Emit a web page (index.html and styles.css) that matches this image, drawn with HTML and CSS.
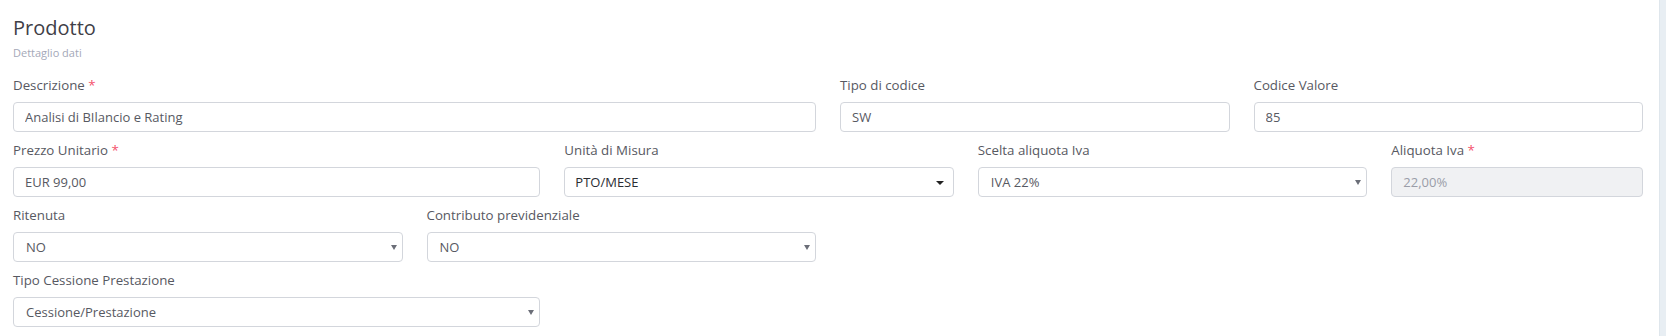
FILE: index.html
```html
<!DOCTYPE html>
<html lang="it">
<head>
<meta charset="UTF-8">
<meta name="viewport" content="width=device-width, initial-scale=1.0">
<title>Prodotto</title>
<link rel="stylesheet" href="styles.css">
</head>
<body>

<div class="page">
  <div class="content">
    <div class="head">
      <h3 class="title">Prodotto</h3>
      <div class="subtitle">Dettaglio dati</div>
    </div>

    <form class="form" onsubmit="return false;">
      <div class="row">
        <div class="field span-6">
          <label for="descrizione">Descrizione <span class="req">*</span></label>
          <input type="text" id="descrizione" value="Analisi di BIlancio e Rating">
        </div>
        <div class="field span-3">
          <label for="tipoCodice">Tipo di codice</label>
          <input type="text" id="tipoCodice" value="SW">
        </div>
        <div class="field span-3">
          <label for="codiceValore">Codice Valore</label>
          <input type="text" id="codiceValore" value="85">
        </div>
      </div>

      <div class="row">
        <div class="field span-4">
          <label for="prezzo">Prezzo Unitario <span class="req">*</span></label>
          <input type="text" id="prezzo" value="EUR 99,00">
        </div>
        <div class="field span-3">
          <label for="unita">Unità di Misura</label>
          <div class="select picker">
            <select id="unita">
              <option>PTO/MESE</option>
            </select>
          </div>
        </div>
        <div class="field span-3">
          <label for="sceltaIva">Scelta aliquota Iva</label>
          <div class="select">
            <select id="sceltaIva">
              <option>IVA 22%</option>
            </select>
          </div>
        </div>
        <div class="field span-2">
          <label for="aliquota">Aliquota Iva <span class="req">*</span></label>
          <input type="text" id="aliquota" value="22,00%" disabled>
        </div>
      </div>

      <div class="row">
        <div class="field span-3">
          <label for="ritenuta">Ritenuta</label>
          <div class="select">
            <select id="ritenuta">
              <option>NO</option>
            </select>
          </div>
        </div>
        <div class="field span-3">
          <label for="contributo">Contributo previdenziale</label>
          <div class="select">
            <select id="contributo">
              <option>NO</option>
            </select>
          </div>
        </div>
      </div>

      <div class="row">
        <div class="field span-4">
          <label for="cessione">Tipo Cessione Prestazione</label>
          <div class="select">
            <select id="cessione">
              <option>Cessione/Prestazione</option>
            </select>
          </div>
        </div>
      </div>
    </form>
  </div>
  <div class="scroll-track"></div>
</div>

</body>
</html>
```

FILE: styles.css
```css
html, body {
  margin: 0;
  padding: 0;
}
body {
  font-family: "Open Sans", Arial, sans-serif;
  background-color: #fff;
  color: #575962;
}
.page {
  display: flex;
  min-height: 336px;
}
.content {
  flex: 1;
  padding: 15px 16px 0 13px;
}
.scroll-track {
  width: 6px;
  background-color: #e8eef3;
  border-left: 1px solid #dfe6ec;
}

.title {
  margin: 0;
  font-size: 20px;
  line-height: 25px;
  font-weight: 400;
  color: #3f4047;
}
.subtitle {
  margin-top: 5px;
  font-size: 11px;
  line-height: 16px;
  color: #a4a8b8;
}

.form {
  margin-top: 14px;
}
.row {
  display: grid;
  grid-template-columns: repeat(12, 1fr);
  column-gap: 24px;
  margin-bottom: 8px;
}
.span-2 { grid-column: span 2; }
.span-3 { grid-column: span 3; }
.span-4 { grid-column: span 4; }
.span-6 { grid-column: span 6; }

label {
  display: block;
  font-size: 13.3px;
  line-height: 20px;
  margin-bottom: 7px;
  color: #575962;
}
.req {
  color: #f4516c;
}

input[type="text"],
select {
  display: block;
  width: 100%;
  height: 30px;
  margin: 0;
  padding: 0 11px;
  border: 1px solid #d3d6dc;
  border-radius: 4px;
  box-sizing: border-box;
  background-color: #fff;
  font-family: inherit;
  font-size: 13px;
  color: #575962;
  outline: none;
}
input[disabled] {
  background-color: #f0f1f3;
  color: #9a9da8;
}

.select {
  position: relative;
}
select {
  appearance: none;
  -webkit-appearance: none;
  padding-left: 12px;
  padding-right: 24px;
}
.select::after {
  content: "";
  position: absolute;
  right: 6px;
  top: 13px;
  border-left: 3px solid transparent;
  border-right: 3px solid transparent;
  border-top: 5px solid #6b6e78;
  pointer-events: none;
}
.picker select {
  padding-left: 10px;
  color: #2b2d33;
}
.picker::after {
  right: 10px;
  top: 14px;
  border-left: 4px solid transparent;
  border-right: 4px solid transparent;
  border-top: 4px solid #222;
}
```
